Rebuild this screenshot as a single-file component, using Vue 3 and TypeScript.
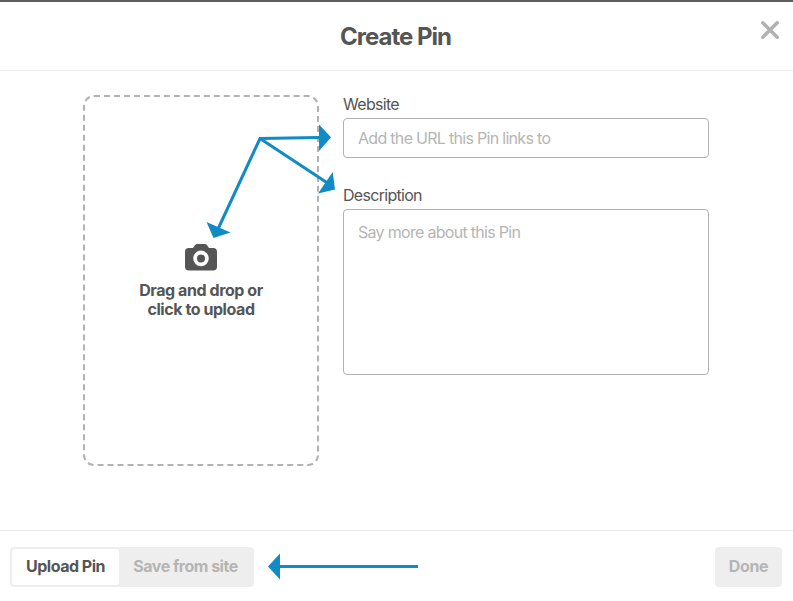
<script setup lang="ts">
import { ref } from 'vue'

type Mode = 'upload' | 'site'

const mode = ref<Mode>('upload')
const website = ref('')
const description = ref('')
const tabs: { id: Mode; label: string }[] = [
  { id: 'upload', label: 'Upload Pin' },
  { id: 'site', label: 'Save from site' },
]
</script>

<template>
  <div class="dialog">
    <header class="header">
      <h1 class="title">Create Pin</h1>
      <button class="close" aria-label="Close">
        <svg width="20" height="20" viewBox="0 0 20 20">
          <path d="M2.8 2.8 17.2 17.2M17.2 2.8 2.8 17.2" />
        </svg>
      </button>
    </header>

    <main class="body">
      <div class="dropzone">
        <svg class="camera" width="32" height="27" viewBox="0 0 32 27">
          <path
            d="M12.2 0h7.6c1 0 1.7.4 2.3 1.2L24 4h4.2A3.8 3.8 0 0 1 32 7.8v14.9a3.8 3.8 0 0 1-3.8 3.8H3.8A3.8 3.8 0 0 1 0 22.7V7.8A3.8 3.8 0 0 1 3.8 4H8l1.9-2.8C10.5.4 11.200 0 12.200 0Z"
          />
          <circle cx="16" cy="14.400" r="5.900" class="lens" />
        </svg>
        <p class="hint">Drag and drop or<br />click to upload</p>
      </div>

      <form class="fields" @submit.prevent>
        <label class="label" for="website">Website</label>
        <input id="website" v-model="website" class="input" placeholder="Add the URL this Pin links to" />
        <label class="label second" for="description">Description</label>
        <textarea id="description" v-model="description" class="input area" placeholder="Say more about this Pin" />
      </form>
    </main>

    <footer class="footer">
      <div class="tabs">
        <button v-for="tab in tabs" :key="tab.id" class="tab" :class="{ active: mode === tab.id }" @click="mode = tab.id">
          {{ tab.label }}
        </button>
      </div>
      <button class="done" disabled>Done</button>
    </footer>

    <svg class="arrows" width="793" height="601" viewBox="0 0 793 601">
      <path class="shaft" d="M319 137.500 260 138.500 218 229M260 138.500 329 184M418 566.500H279" />
      <path class="head" d="M319 124.500V151L331 137.300ZM332.700 172 335 189.500 318 193.500ZM206.500 222 213.500 238 230.500 232.500ZM280 553.500V579.500L268 566.500Z" />
    </svg>
  </div>
</template>

<style>
body {
  margin: 0;
  background: #fff;
}
</style>

<style scoped>
.dialog {
  position: relative;
  box-sizing: border-box;
  display: flex;
  flex-direction: column;
  width: 793px;
  height: 601px;
  overflow: hidden;
  border-top: 2px solid #5f5f5f;
  background: #fff;
  color: #555;
  font-family: Inter, "Liberation Sans", sans-serif;
  font-size: 16px;
}
button {
  padding: 0;
  border: 0;
  background: none;
  color: inherit;
  font: inherit;
  letter-spacing: inherit;
}
.header {
  box-sizing: border-box;
  display: grid;
  grid-template-columns: 60px 1fr 60px;
  height: 69px;
  border-bottom: 1px solid #ebebeb;
}
.title {
  grid-column: 2;
  margin: 0;
  padding-right: 2px;
  text-align: center;
  font-size: 24px;
  font-weight: 700;
  line-height: 70px;
  letter-spacing: -1px;
}
.close {
  width: 20px;
  height: 20px;
  margin: 18px 0 0 27px;
}
.close svg {
  display: block;
  fill: none;
  stroke: #b2b2b2;
  stroke-width: 3.6;
  stroke-linecap: round;
}
.body {
  display: flex;
  flex: 1;
  gap: 24px;
  padding: 24px 84px 0 83px;
}
.dropzone {
  box-sizing: border-box;
  display: flex;
  flex-direction: column;
  align-items: center;
  width: 236px;
  height: 371px;
  padding-top: 147px;
  border: 2px dashed #b2b2b2;
  border-radius: 11px;
}
.camera {
  fill: #555;
}
.lens {
  stroke: #fff;
  stroke-width: 3.8;
}
.hint {
  margin: 10px 0 0;
  text-align: center;
  font-weight: 700;
  line-height: 19px;
  letter-spacing: -0.43px;
}
.fields {
  display: flex;
  flex: 1;
  flex-direction: column;
}
.label {
  height: 23px;
  line-height: 19px;
  letter-spacing: -0.7px;
}
.second {
  margin-top: 28px;
}
.input {
  box-sizing: border-box;
  width: 366px;
  height: 40px;
  padding: 0 14px;
  border: 1px solid #b2b2b2;
  border-radius: 4px;
  outline: 0;
  background: #fff;
  color: #555;
  font: inherit;
  letter-spacing: -0.7px;
}
.input::placeholder {
  color: #b5b5b5;
  opacity: 1;
}
.area {
  height: 166px;
  padding-top: 13px;
  line-height: 19px;
  resize: none;
}
.footer {
  box-sizing: border-box;
  display: flex;
  align-items: flex-start;
  justify-content: space-between;
  height: 71px;
  padding: 16px 11px 0 10px;
  border-top: 1px solid #ebebeb;
  font-weight: 700;
}
.tabs {
  box-sizing: border-box;
  display: flex;
  width: 244px;
  height: 40px;
  padding: 2px;
  border-radius: 4px;
  background: #eee;
}
.tab {
  width: 133px;
  padding-bottom: 2px;
  color: #b5b5b5;
  letter-spacing: -0.5px;
}
.tab.active {
  width: 107px;
  border-radius: 3px;
  background: #fff;
  color: #555;
}
.done {
  width: 67px;
  height: 40px;
  padding-bottom: 2px;
  border-radius: 4px;
  background: #eee;
  color: #b5b5b5;
  letter-spacing: -0.4px;
}
.arrows {
  position: absolute;
  top: -2px;
  left: 0;
  pointer-events: none;
}
.shaft {
  fill: none;
  stroke: #118bc5;
  stroke-width: 3;
  stroke-linejoin: miter;
}
.head {
  fill: #118bc5;
}
</style>
